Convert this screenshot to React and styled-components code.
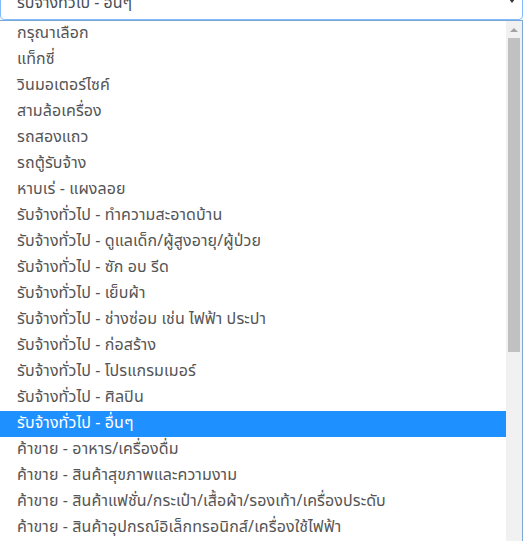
import React from 'react';
import styled, { createGlobalStyle } from 'styled-components';

const GlobalStyle = createGlobalStyle`
  html, body {
    margin: 0;
    padding: 0;
    background: #ffffff;
    overflow: hidden;
  }
  body {
    font-family: "Noto Sans Thai", "Noto Sans", "DejaVu Sans", sans-serif;
  }
`;

const Page = styled.div`
  width: 526px;
  height: 541px;
  overflow: hidden;
`;

const SelectBox = styled.div`
  box-sizing: border-box;
  margin-top: -14px;
  width: 523px;
  height: 34px;
  padding: 0 16px;
  display: flex;
  align-items: center;
  justify-content: space-between;
  border: 1px solid #80bdff;
  border-radius: 4px;
  color: #495057;
  font-size: 16px;
`;

const Caret = styled.span`
  width: 0;
  height: 0;
  margin-top: -4px;
  margin-right: -9px;
  border-left: 3.5px solid transparent;
  border-right: 3.5px solid transparent;
  border-top: 4px solid #333;
`;

const ListBox = styled.div`
  box-sizing: border-box;
  width: 524px;
  margin-left: -1px;
  height: 560px;
  display: flex;
  border: 1px solid #7aa7d6;
  background: #fff;
`;

const Options = styled.ul`
  flex: 1;
  margin: 0;
  padding: 0;
  list-style: none;
`;

const Option = styled.li`
  box-sizing: border-box;
  height: 26px;
  line-height: 25px;
  padding-left: 17px;
  font-size: 16px;
  letter-spacing: 0.1px;
  white-space: nowrap;
  color: ${({ $selected }) => ($selected ? '#ffffff' : '#555555')};
  background: ${({ $selected }) => ($selected ? '#1e90ff' : 'transparent')};
`;

const ScrollTrack = styled.div`
  width: 16px;
  background: #f1f1f1;
  display: flex;
  flex-direction: column;
  align-items: center;
`;

const Arrow = styled.div`
  height: 17px;
  display: flex;
  align-items: center;
  justify-content: center;
  &::after {
    content: '';
    border-left: 4px solid transparent;
    border-right: 4px solid transparent;
    ${({ $down }) =>
      $down ? 'border-top: 4px solid #505050;' : 'border-bottom: 4px solid #a3a3a3;'}
  }
`;

const Thumb = styled.div`
  width: 12px;
  height: 314px;
  background: #c1c1c1;
`;

const Spacer = styled.div`
  flex: 1;
`;

const options = [
  'กรุณาเลือก',
  'แท็กซี่',
  'วินมอเตอร์ไซค์',
  'สามล้อเครื่อง',
  'รถสองแถว',
  'รถตู้รับจ้าง',
  'หาบเร่ - แผงลอย',
  'รับจ้างทั่วไป - ทำความสะอาดบ้าน',
  'รับจ้างทั่วไป - ดูแลเด็ก/ผู้สูงอายุ/ผู้ป่วย',
  'รับจ้างทั่วไป - ซัก อบ รีด',
  'รับจ้างทั่วไป - เย็บผ้า',
  'รับจ้างทั่วไป - ช่างซ่อม เช่น ไฟฟ้า ประปา',
  'รับจ้างทั่วไป - ก่อสร้าง',
  'รับจ้างทั่วไป - โปรแกรมเมอร์',
  'รับจ้างทั่วไป - ศิลปิน',
  'รับจ้างทั่วไป - อื่นๆ',
  'ค้าขาย - อาหาร/เครื่องดื่ม',
  'ค้าขาย - สินค้าสุขภาพและความงาม',
  'ค้าขาย - สินค้าแฟชั่น/กระเป๋า/เสื้อผ้า/รองเท้า/เครื่องประดับ',
  'ค้าขาย - สินค้าอุปกรณ์อิเล็กทรอนิกส์/เครื่องใช้ไฟฟ้า',
];

const selected = 'รับจ้างทั่วไป - อื่นๆ';

const App = () => (
  <Page>
    <GlobalStyle />
    <SelectBox>
      <span>{selected}</span>
      <Caret />
    </SelectBox>
    <ListBox>
      <Options>
        {options.map((o) => (
          <Option key={o} $selected={o === selected}>
            {o}
          </Option>
        ))}
      </Options>
      <ScrollTrack>
        <Arrow />
        <Thumb />
        <Spacer />
        <Arrow $down />
      </ScrollTrack>
    </ListBox>
  </Page>
);

export default App;
